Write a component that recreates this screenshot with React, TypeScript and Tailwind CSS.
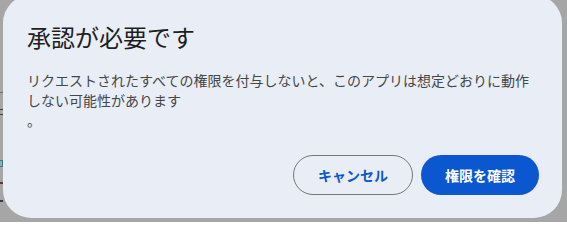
import React from "react"

const jp = { fontFamily: '"Noto Sans CJK JP", "Noto Sans", sans-serif' }

export default function App() {
  return (
    <div className="flex h-[222px] w-[567px] overflow-hidden bg-[#a6a6a6]" style={jp}>
      {/* sliver of the page behind the scrim */}
      <div className="flex w-[3px] shrink-0 flex-col pt-[92px]">
        <div className="h-[1px] bg-[#6f6f6f]" />
        <div className="mt-[16px] h-[6px] border-y border-[#3c3c3c]" />
        <div className="mt-[45px] h-[7px] border border-l-0 border-[#2f7f86]" />
        <div className="mt-[15px] h-[2px] bg-[#5a3a3a]" />
        <div className="mt-[16px] h-[2px] bg-[#3a3a4a]" />
      </div>

      <div className="mt-[-5px] flex h-[223px] w-[559px] shrink-0 flex-col rounded-[28px] bg-[#e9edf6] pt-6 pl-6 pr-[23px] pb-[23px]">
        <h2 className="pt-[2px] text-[24px] leading-[32px] text-[#1f1f1f]">承認が必要です</h2>
        <p className="mt-[17px] text-[14px] leading-[20px] text-[#444746]">
          リクエストされたすべての権限を付与しないと、このアプリは想定どおりに動作しない可能性があります
          <br />。
        </p>
        <div className="mt-auto flex justify-end gap-2">
          <button className="h-[40px] w-[120px] rounded-full border border-[#747775] text-[14px] font-bold text-[#0b57d0]">
            キャンセル
          </button>
          <button className="h-[40px] w-[118px] rounded-full bg-[#0b57d0] text-[14px] font-bold text-white">
            権限を確認
          </button>
        </div>
      </div>
    </div>
  )
}
